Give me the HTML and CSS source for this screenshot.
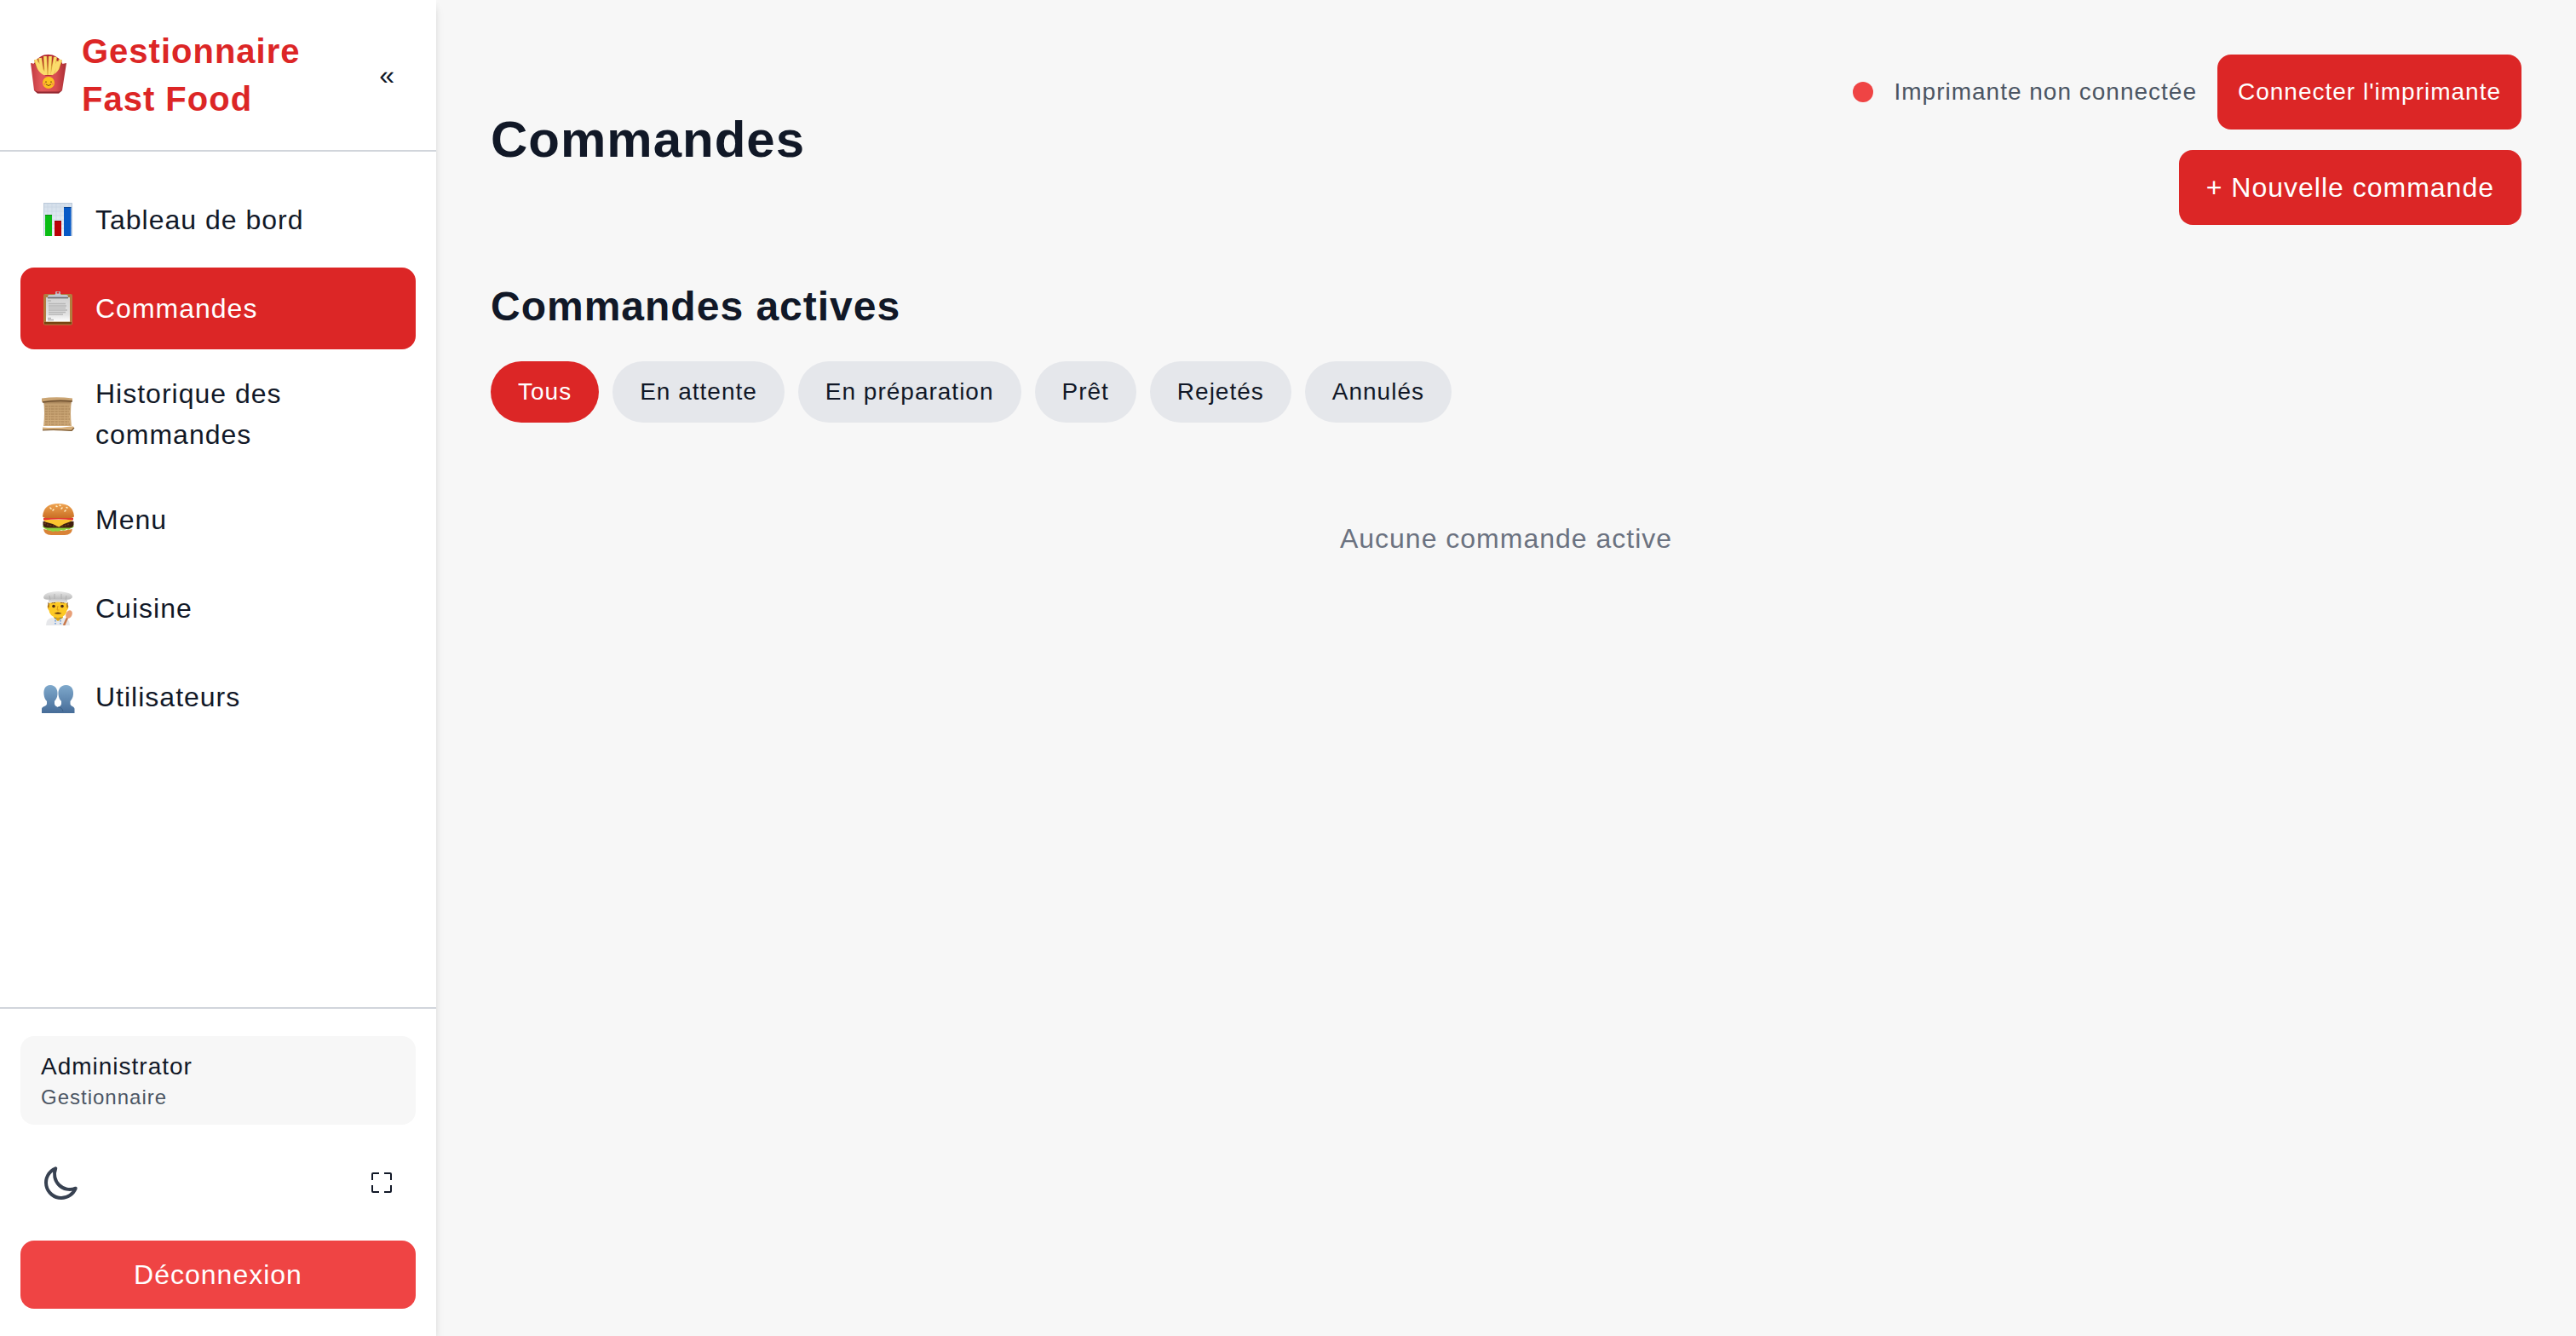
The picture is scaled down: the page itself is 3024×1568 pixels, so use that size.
FILE: index.html
```html
<!DOCTYPE html>
<html lang="fr">
<head>
<meta charset="utf-8">
<meta name="viewport" content="width=device-width, initial-scale=1">
<title>Commandes – Gestionnaire Fast Food</title>
<link rel="stylesheet" href="styles.css">
</head>
<body>
<div class="app">
  <aside class="sidebar">
    <div class="brand">
      <svg class="brand-icon" viewBox="0 0 48 48" aria-hidden="true">
        <defs>
          <linearGradient id="box" x1="0" y1="0" x2="1" y2="0"><stop offset="0" stop-color="#c23a40"/><stop offset=".3" stop-color="#e2595c"/><stop offset=".7" stop-color="#d94d50"/><stop offset="1" stop-color="#a92d34"/></linearGradient>
        </defs>
        <path d="M7 12C12 3 18 0 24.500 0S38 3 42 12L38 26H11Z" fill="#b3242f"/>
        <g stroke="#d9a53a" stroke-width="4.400" stroke-linecap="butt">
          <path d="M10 6l6 18M15 4l3 20M21 2l1 22M27 2l-1 22M33 3l-4 21M39 6l-6 18M36 8l-7 16M12 10l9 14"/>
        </g>
        <g stroke="#fbdc6c" stroke-width="3" stroke-linecap="butt">
          <path d="M10 6l6 18M15 4l3 20M21 2l1 22M27 2l-1 22M33 3l-4 21M39 6l-6 18M36 8l-7 16M12 10l9 14"/>
        </g>
        <path d="M4 10l5 1C13 21 18 25 24.500 25S36 21 41 11l5-1-5 32-4 3.500H12L8 42Z" fill="url(#box)"/>
        <path d="M8 42l4 3.500h25l4-3.500-4 1.500H12Z" fill="#8e2730"/>
        <circle cx="25" cy="33" r="7" fill="#fcc21f"/>
        <path d="M21 32.500q1-1.500 2 0M27 32.500q1-1.500 2 0M22 35q3 3 6 0" fill="none" stroke="#7a4a10" stroke-width="1"/>
        <circle cx="20.500" cy="34.500" r="1.200" fill="#f58a4b"/><circle cx="29.500" cy="34.500" r="1.200" fill="#f58a4b"/>
      </svg>
      <span class="brand-name">Gestionnaire Fast Food</span>
      <button class="collapse" type="button" aria-label="Réduire le menu">«</button>
    </div>

    <nav class="nav" aria-label="Navigation principale">
      <a class="nav-item" href="#tableau">
        <svg class="nav-icon" viewBox="0 0 40 40" aria-hidden="true">
          <defs><linearGradient id="paper" x1="0" y1="0" x2="0" y2="1"><stop offset="0" stop-color="#d3deea"/><stop offset="1" stop-color="#f2f6fa"/></linearGradient></defs>
          <path d="M3 0h34v39H3Z" fill="url(#paper)"/>
          <path d="M3 5h34M3 10h34M3 15h34M3 20h34M3 25h34M3 30h34M8 0v39M13 0v39M18 0v39M23 0v39M28 0v39M33 0v39" stroke="#c7d5e3" stroke-width=".6"/>
          <path d="M3.500 0v39M36.500 0v39M3 .500h34" stroke="#bccada" stroke-width="1"/>
          <path d="M5 14h8v25H5Z" fill="#0bbd15"/><path d="M16 21h8v18h-8Z" fill="#bb0208"/><path d="M27 5h8.500v34H27Z" fill="#0759c6"/>
          <path d="M5 14.500h8M16 21.500h8M27 5.500h8.500" stroke="#000" stroke-opacity=".25"/>
        </svg>
        <span>Tableau de bord</span>
      </a>
      <a class="nav-item active" href="#commandes" aria-current="page">
        <svg class="nav-icon" viewBox="0 0 40 40" aria-hidden="true">
          <defs><linearGradient id="sheet" x1="0" y1="0" x2="0" y2="1"><stop offset="0" stop-color="#d2d2d2"/><stop offset=".7" stop-color="#e2e2e2"/><stop offset="1" stop-color="#fff"/></linearGradient></defs>
          <rect x="3" y="3" width="34" height="36.500" rx="2" fill="#b07d3f"/>
          <path d="M4 36h32v2.500H4Z" fill="#774411"/>
          <path d="M6 7h28v28.500H6Z" fill="url(#sheet)"/>
          <path d="M8 11h4M9 14.500h20M9 17h21M9 19.500h20M9 22h22M9 24.500h20M9 27h17M8 31.500h4M8 33.500h7" stroke="#b6b6b6" stroke-width="1.600"/>
          <circle cx="20" cy="2" r="2.200" fill="none" stroke="#b9bfca" stroke-width="1.500"/>
          <path d="M8 7.500V6q0-2 2-2h6l2-1.500h4L24 4h6q2 0 2 2v1.500Z" fill="#c3c8d1"/>
          <path d="M8 7.500h24" stroke="#6c6c70" stroke-width="1.600"/>
        </svg>
        <span>Commandes</span>
      </a>
      <a class="nav-item" href="#historique">
        <svg class="nav-icon" viewBox="0 0 40 40" aria-hidden="true">
          <defs><linearGradient id="scroll" x1="0" y1="0" x2="0" y2="1"><stop offset="0" stop-color="#8d6b45"/><stop offset=".15" stop-color="#c39f70"/><stop offset="1" stop-color="#d2ad7b"/></linearGradient></defs>
          <path d="M3 4h33q-2 14 0 30H3Q5 18 3 4Z" fill="url(#scroll)"/>
          <path d="M5 11h28M5 14h29M5 17h28M5 20h29M5 23h28M5 26h29M5 29h28M5 32h29" stroke="#a47e52" stroke-width="1" stroke-dasharray="3 1 2 .700 4 1"/>
          <path d="M1 1.500q17-2.300 36 0v3.500Q19 3 2 6.500L1 5Z" fill="#caa472"/>
          <path d="M2 6q17-3 35-1" fill="none" stroke="#6e5030" stroke-width="1.500"/>
          <path d="M2 35.500Q18 37 35 34.500h3l1 2-2 3q-17 0-35-.800Z" fill="#d7b07c"/>
          <path d="M2 38.800q17-1 34 .700l3-3.500" fill="none" stroke="#80603b" stroke-width="1.300"/>
        </svg>
        <span>Historique des commandes</span>
      </a>
      <a class="nav-item" href="#menu">
        <svg class="nav-icon" viewBox="0 0 40 40" aria-hidden="true">
          <defs><linearGradient id="bun" x1="0" y1="0" x2="0" y2="1"><stop offset="0" stop-color="#f0a552"/><stop offset="1" stop-color="#c96f24"/></linearGradient></defs>
          <path d="M3 31q17 4 34 0-1 7-9 7H12q-8 0-9-7Z" fill="#d98336"/>
          <path d="M2 27q18-3 37 0-1 3-4 3-2 3-5 1-3 3-6 1-4 3-7 1-3 2-6-.500-3 1-5-1.500Q2 29.500 2 27Z" fill="#8ed33d"/>
          <path d="M2.500 22q18-3 36 0v4q-1 3.500-5 3.500H8q-5 0-5.500-3.500Z" fill="#40200f"/>
          <path d="M4 24l4 2 5 1 7 1 8-1 6-2" fill="none" stroke="#6d3b1d" stroke-width="1.500" stroke-dasharray="2 1.500"/>
          <path d="M3 20h35l-3 2-8 3-6 3.500L14 25l-9-2.500Z" fill="#fbc52f"/>
          <path d="M3 18q17-2 35 0v2.500q-17-2-35 0Z" fill="#e33b31"/>
          <path d="M2 16Q3 1 20.500 1T39 16q-1 2-5 2H7q-4 0-5-2Z" fill="url(#bun)"/>
          <path d="M11 6l1 1M18 4l1 .500M24 7l1-1M29 9l-1 1M14 9l1-1M22 3l1 .500M31 6l-1-.500" stroke="#fff0c8" stroke-width="1.500" stroke-linecap="round"/>
        </svg>
        <span>Menu</span>
      </a>
      <a class="nav-item" href="#cuisine">
        <svg class="nav-icon" viewBox="0 0 40 40" aria-hidden="true">
          <defs><linearGradient id="hat" x1="0" y1="0" x2="0" y2="1"><stop offset="0" stop-color="#e9e9e9"/><stop offset=".6" stop-color="#bfbfbf"/><stop offset="1" stop-color="#ececec"/></linearGradient></defs>
          <path d="M6 40q0-8 7-9l7 3 7-3q7 1 7 9Z" fill="#e6e7ea"/>
          <path d="M15 31l5 4 6-4-1-4H16Z" fill="#dca314"/>
          <path d="M9 16q-2 0-1 4 1 3 3 3Zm22 0q2 0 1 4-1 3-3 3Z" fill="#efb01c"/>
          <path d="M9 12h22v8q-1 11-11 11T9 20Z" fill="#fdc924"/>
          <path d="M9 13v6M31 13v6" stroke="#885522" stroke-width="1.200"/>
          <circle cx="15" cy="17.500" r="1.800" fill="#4a2a16"/><circle cx="25" cy="17.500" r="1.800" fill="#4a2a16"/>
          <path d="M12.500 14q2-1.500 4.500-.500M23 13.500q2.500-1 4.500.500" fill="none" stroke="#7b4a12" stroke-width="1"/>
          <path d="M15.500 26q4.500-3 9 0-4.500 1.500-9 0Z" fill="#643812"/>
          <path d="M20 17l-1 5h2.500" fill="none" stroke="#d99615"/>
          <path d="M17 31v9M23 31v9" stroke="#4c8ad6" stroke-width="1.300" stroke-dasharray="1.500 1.500"/>
          <path d="M3 7Q4 2 12 1q8-2 16 0 8 1 9 5 0 3-6 4v4Q20 11 9 14v-4Q3 10 3 7Z" fill="url(#hat)"/>
          <path d="M10 5l1 5M16 3v6M24 3v6M30 5l-1 5" stroke="#aaa" stroke-width=".8"/>
          <path d="M27 40l4-9" stroke="#c9794c" stroke-width="2.500"/><ellipse cx="33" cy="27" rx="3.600" ry="5" transform="rotate(25 33 27)" fill="#e8a078"/>
        </svg>
        <span>Cuisine</span>
      </a>
      <a class="nav-item" href="#utilisateurs">
        <svg class="nav-icon" viewBox="0 0 40 40" aria-hidden="true">
          <defs><linearGradient id="user" x1="0" y1="0" x2="0" y2="1"><stop offset="0" stop-color="#7fa9cc"/><stop offset="1" stop-color="#466c98"/></linearGradient></defs>
          <path d="M11 6c6 0 9 5 8.500 11-.300 4-2 6-3.500 8v3c0 2 2 3 4 4 2-1 4-2 4-4v-3c-2-2-3-4-3.500-8C20 11 23 6 29.500 6s9 5 8.500 11c-.300 4-2 6-3.500 8v3c0 3 5 3 5 6v5H1v-5c0-3 6-3 6-6v-3c-2-2-3-4-3.500-8C3 11 5 6 11 6Z" fill="url(#user)"/>
          <path d="M20 32q5 0 6 5" fill="none" stroke="#35597f" stroke-width=".8"/>
        </svg>
        <span>Utilisateurs</span>
      </a>
    </nav>

    <div class="sidebar-footer">
      <div class="user-card">
        <div class="user-name">Administrator</div>
        <div class="user-role">Gestionnaire</div>
      </div>
      <div class="tools">
        <button class="tool tool-theme" type="button" aria-label="Mode sombre">
          <svg width="48" height="48" viewBox="0 0 24 24" fill="none" stroke="currentColor" stroke-width="2" stroke-linecap="round" stroke-linejoin="round" aria-hidden="true"><path d="M20.354 15.354A9 9 0 018.646 3.646 9.003 9.003 0 0012 21a9.003 9.003 0 008.354-5.646z"/></svg>
        </button>
        <button class="tool" type="button" aria-label="Plein écran">
          <svg width="32" height="32" viewBox="0 0 32 32" fill="none" stroke="currentColor" stroke-width="2" aria-hidden="true"><path d="M5 13V6q0-1 1-1h7M19 5h7q1 0 1 1v7M27 19v7q0 1-1 1h-7M13 27H6q-1 0-1-1v-7"/></svg>
        </button>
      </div>
      <button class="logout" type="button">Déconnexion</button>
    </div>
  </aside>

  <main class="main">
    <header class="page-header">
      <h1>Commandes</h1>
      <div class="actions">
        <div class="printer">
          <span class="dot"></span>
          <span class="printer-status">Imprimante non connectée</span>
          <button class="btn btn-small" type="button">Connecter l'imprimante</button>
        </div>
        <button class="btn" type="button">+ Nouvelle commande</button>
      </div>
    </header>

    <section class="orders">
      <h2>Commandes actives</h2>
      <div class="filters">
        <button class="pill selected" type="button">Tous</button>
        <button class="pill" type="button">En attente</button>
        <button class="pill" type="button">En préparation</button>
        <button class="pill" type="button">Prêt</button>
        <button class="pill" type="button">Rejetés</button>
        <button class="pill" type="button">Annulés</button>
      </div>
      <p class="empty">Aucune commande active</p>
    </section>
  </main>
</div>
</body>
</html>
```
FILE: styles.css
```css
*,
*::before,
*::after {
  box-sizing: border-box;
}

body {
  margin: 0;
  background: #f7f7f7;
  color: #111827;
  font-family: "Liberation Sans", Arial, sans-serif;
  font-size: 32px;
  line-height: 48px;
  letter-spacing: 1px;
}

h1,
h2,
p {
  margin: 0;
}

button {
  border: 0;
  background: none;
  color: inherit;
  font: inherit;
  letter-spacing: inherit;
  cursor: pointer;
}

svg {
  display: block;
  flex: none;
}

.app {
  display: flex;
  min-height: 100vh;
}

/* Sidebar */
.sidebar {
  display: flex;
  flex-direction: column;
  flex: none;
  width: 512px;
  background: #fff;
  box-shadow: 0 8px 12px -2px rgba(0, 0, 0, 0.1), 0 4px 8px -2px rgba(0, 0, 0, 0.1);
}

.brand {
  display: flex;
  align-items: center;
  gap: 16px;
  padding: 32px;
  border-bottom: 2px solid #d1d5db;
}

.brand-icon {
  width: 48px;
  height: 48px;
}

.brand-name {
  flex: 1;
  color: #dc2626;
  font-size: 40px;
  font-weight: 700;
  line-height: 56px;
}

.collapse {
  padding: 16px;
}

.nav {
  display: flex;
  flex: 1;
  flex-direction: column;
  gap: 8px;
  padding: 32px 24px;
}

.nav-item {
  display: flex;
  align-items: center;
  gap: 24px;
  min-height: 96px;
  padding: 20px 24px;
  border-radius: 16px;
  color: inherit;
  text-decoration: none;
}

.nav-item.active {
  background: #dc2626;
  color: #fff;
}

.nav-icon {
  width: 40px;
  height: 40px;
}

.sidebar-footer {
  display: flex;
  flex-direction: column;
  gap: 24px;
  padding: 32px 24px;
  border-top: 2px solid #d1d5db;
}

.user-card {
  padding: 16px 24px;
  border-radius: 16px;
  background: #f7f7f7;
}

.user-name {
  font-size: 28px;
  line-height: 40px;
}

.user-role {
  color: #4b5563;
  font-size: 24px;
  line-height: 32px;
}

.tools {
  display: flex;
  align-items: center;
  justify-content: space-between;
}

.tool {
  padding: 20px 24px;
}

.tool-theme {
  color: #374151;
}

.logout {
  padding: 16px;
  border-radius: 16px;
  background: #ef4444;
  color: #fff;
}

/* Page */
.main {
  flex: 1;
  min-width: 0;
  padding: 64px;
}

.page-header {
  display: flex;
  align-items: center;
  justify-content: space-between;
  margin-bottom: 64px;
}

h1 {
  font-size: 60px;
  line-height: 72px;
}

.actions {
  display: flex;
  flex-direction: column;
  align-items: flex-end;
  gap: 24px;
}

.printer {
  display: flex;
  align-items: center;
  gap: 24px;
}

.dot {
  width: 24px;
  height: 24px;
  border-radius: 50%;
  background: #ef4444;
}

.printer-status {
  color: #4b5563;
  font-size: 28px;
}

.btn {
  padding: 20px 32px;
  border-radius: 16px;
  background: #dc2626;
  color: #fff;
}

.btn-small {
  padding: 20px 24px;
  font-size: 28px;
}

h2 {
  margin-bottom: 32px;
  font-size: 48px;
  line-height: 64px;
}

.filters {
  display: flex;
  flex-wrap: wrap;
  gap: 16px;
}

.pill {
  padding: 16px 32px;
  border-radius: 36px;
  background: #e5e7eb;
  font-size: 28px;
  line-height: 40px;
}

.pill.selected {
  background: #dc2626;
  color: #fff;
}

.empty {
  padding: 112px 0;
  color: #6b7280;
  text-align: center;
}
```
